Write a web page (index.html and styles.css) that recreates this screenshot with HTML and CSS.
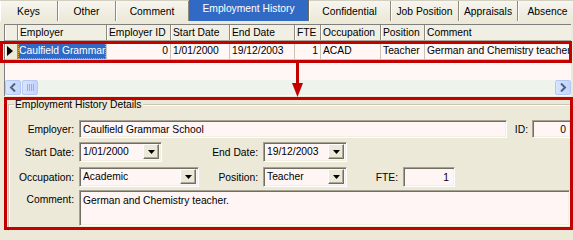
FILE: index.html
```html
<!DOCTYPE html>
<html>
<head>
<meta charset="utf-8">
<link rel="stylesheet" href="styles.css">
</head>
<body>
<div class="tabs">
  <div class="tab w-keys">Keys</div>
  <div class="tab w-other">Other</div>
  <div class="tab w-comment">Comment</div>
  <div class="tab tab-sel w-emp">Employment History</div>
  <div class="tab w-conf">Confidential</div>
  <div class="tab w-job">Job Position</div>
  <div class="tab w-appr">Appraisals</div>
  <div class="tab w-abs">Absence</div>
</div>

<div class="grid">
  <div class="grid-head">
    <div class="hc c-ind"></div>
    <div class="hc c-emp">Employer</div>
    <div class="hc c-eid">Employer ID</div>
    <div class="hc c-sd">Start Date</div>
    <div class="hc c-ed">End Date</div>
    <div class="hc c-fte">FTE</div>
    <div class="hc c-occ">Occupation</div>
    <div class="hc c-pos">Position</div>
    <div class="hc c-com">Comment</div>
  </div>
  <div class="grid-row">
    <div class="dc c-ind ind-cell"><svg class="ind-tri" width="6" height="10" viewBox="0 0 6 10"><path d="M0 0 L6 5 L0 10 Z" fill="#000"/></svg></div>
    <div class="dc c-emp sel-wrap"><span class="sel">Caulfield Grammar</span></div>
    <div class="dc c-eid num">0</div>
    <div class="dc c-sd">1/01/2000</div>
    <div class="dc c-ed">19/12/2003</div>
    <div class="dc c-fte num">1</div>
    <div class="dc c-occ">ACAD</div>
    <div class="dc c-pos">Teacher</div>
    <div class="dc c-com">German and Chemistry teacher</div>
  </div>
  <div class="grid-empty"></div>
  <div class="hscroll">
    <div class="sb-btn"><svg width="8" height="9" viewBox="0 0 8 9"><path d="M6 0.5 L2 4.5 L6 8.5" fill="none" stroke="#4D6185" stroke-width="2"/></svg></div>
    <div class="sb-thumb"><svg width="7" height="7" viewBox="0 0 7 7"><path d="M0.5 0 V7 M2.5 0 V7 M4.5 0 V7 M6.5 0 V7" stroke="#8CB0F8" stroke-width="1"/></svg></div>
    <div class="sb-track"></div>
    <div class="sb-btn"><svg width="8" height="9" viewBox="0 0 8 9"><path d="M2 0.5 L6 4.5 L2 8.5" fill="none" stroke="#4D6185" stroke-width="2"/></svg></div>
  </div>
</div>

<div class="details">
  <div class="group">
    <span class="legend">Employment History Details</span>
    <div class="frow r1">
      <span class="lbl l-main">Employer:</span>
      <div class="inp i-emp">Caulfield Grammar School</div>
      <span class="lbl l-id">ID:</span>
      <div class="inp i-id">0</div>
    </div>
    <div class="frow r2">
      <span class="lbl l-main">Start Date:</span>
      <div class="combo cb-date"><span class="cb-text">1/01/2000</span><span class="cb-btn"><svg width="7" height="4" viewBox="0 0 7 4"><path d="M0 0 H7 L3.5 4 Z" fill="#000"/></svg></span></div>
      <span class="lbl l-end">End Date:</span>
      <div class="combo cb-date2"><span class="cb-text">19/12/2003</span><span class="cb-btn"><svg width="7" height="4" viewBox="0 0 7 4"><path d="M0 0 H7 L3.5 4 Z" fill="#000"/></svg></span></div>
    </div>
    <div class="frow r3">
      <span class="lbl l-main">Occupation:</span>
      <div class="combo cb-occ"><span class="cb-text">Academic</span><span class="cb-btn"><svg width="7" height="4" viewBox="0 0 7 4"><path d="M0 0 H7 L3.5 4 Z" fill="#000"/></svg></span></div>
      <span class="lbl l-pos">Position:</span>
      <div class="combo cb-date2"><span class="cb-text">Teacher</span><span class="cb-btn"><svg width="7" height="4" viewBox="0 0 7 4"><path d="M0 0 H7 L3.5 4 Z" fill="#000"/></svg></span></div>
      <span class="lbl l-fte">FTE:</span>
      <div class="inp i-fte">1</div>
    </div>
    <div class="frow r4">
      <span class="lbl l-main l-top">Comment:</span>
      <div class="inp memo">German and Chemistry teacher.</div>
    </div>
  </div>
</div>

<div class="mark mark-row"></div>
<div class="mark mark-details"></div>
<svg class="arrow" width="16" height="36" viewBox="0 0 16 36">
  <rect x="6" y="0" width="3" height="23" fill="#C40000"/>
  <path d="M2 21 H13 L7.5 35 Z" fill="#C40000"/>
</svg>
</body>
</html>
```

FILE: styles.css
```css
html, body {
  margin: 0;
  padding: 0;
}
body {
  position: relative;
  width: 573px;
  height: 231px;
  overflow: hidden;
  background: #ECE9D8;
  font-family: "Liberation Sans", Arial, sans-serif;
  font-size: 10.3px;
  color: #000;
}

/* ---------- tabs ---------- */
.tabs {
  display: flex;
  height: 22px;
  border-top: 1px solid #D2CFC0;
  box-sizing: border-box;
  white-space: nowrap;
}
.tab {
  flex: none;
  box-sizing: border-box;
  height: 20px;
  line-height: 22px;
  text-align: center;
  background: linear-gradient(#F6F5EF, #ECE9D8);
  border-right: 1px solid #8E8B7C;
  box-shadow: inset 1px 0 #FFFFFF;
}
.tab-sel {
  margin-top: -1px;
  height: 21px;
  line-height: 18px;
  background: #316AC5;
  color: #fff;
  box-shadow: none;
  border-right: 1px solid #6E6B5E;
}
.w-keys { width: 58px; }
.w-other { width: 58px; }
.w-comment { width: 73px; }
.w-emp { width: 120px; }
.w-conf { width: 82px; }
.w-job { width: 68px; }
.w-appr { width: 59px; }
.w-abs { width: 60px; }

/* ---------- grid ---------- */
.grid {
  margin: 2px 0 0 4px;
  width: 567px;
  height: 72px;
  box-sizing: border-box;
  border-left: 1px solid #7F7F7F;
  border-top: 1px solid #7F7F7F;
  background: #FFF6F6;
  overflow: hidden;
}
.grid-head, .grid-row {
  display: flex;
  white-space: nowrap;
}
.grid-head {
  height: 16px;
  background: #F1EFE3;
  border-bottom: 1px solid #ACA899;
  box-sizing: border-box;
}
.hc {
  flex: none;
  box-sizing: border-box;
  height: 15px;
  line-height: 16px;
  padding-left: 2px;
  border-right: 1px solid #8E8B7C;
  box-shadow: inset 1px 0 #FFFFFF;
  overflow: hidden;
}
.grid-row {
  height: 19px;
  box-sizing: border-box;
  border-bottom: 1px solid #C8C4B8;
}
.dc {
  flex: none;
  box-sizing: border-box;
  height: 18px;
  line-height: 20px;
  padding-left: 2px;
  border-right: 1px solid #C8C4B8;
  overflow: hidden;
}
.dc.num {
  text-align: right;
  padding-left: 0;
  padding-right: 2px;
}
.c-ind { width: 13px; padding-left: 0; }
.c-emp { width: 89px; }
.c-eid { width: 64px; }
.c-sd { width: 59px; }
.c-ed { width: 65px; }
.c-fte { width: 26px; }
.c-occ { width: 60px; }
.c-pos { width: 44px; }
.c-com { flex: 1 1 auto; width: auto; border-right: none; }
.ind-cell {
  background: #ECE9D8;
  border-right: 1px solid #8E8B7C;
  box-shadow: inset 1px 0 #fff;
  display: flex;
  align-items: center;
  padding-left: 2px;
  padding-top: 2px;
}
.ind-tri { display: block; }
.sel-wrap {
  padding-left: 0;
  padding-top: 1px;
}
.sel {
  display: block;
  box-sizing: border-box;
  height: 17px;
  line-height: 17px;
  margin-right: 0;
  padding-left: 1px;
  background: #316AC5;
  color: #fff;
  outline: 1px dotted #D9A94A;
  outline-offset: -1px;
  white-space: nowrap;
  overflow: hidden;
}
.grid-empty {
  height: 20px;
}
.hscroll {
  display: flex;
  height: 15px;
  background: #EEF3EC;
}
.sb-btn, .sb-thumb {
  flex: none;
  width: 16px;
  height: 15px;
  box-sizing: border-box;
  border: 1px solid #B4C8F6;
  border-radius: 2px;
  background: linear-gradient(90deg, #D9E4FD, #C3D3FC);
  display: flex;
  align-items: center;
  justify-content: center;
}
.sb-thumb { margin-left: 1px; }
.sb-track { flex: 1 1 auto; }

/* ---------- details ---------- */
.details {
  margin: 1px 0 0 4px;
  width: 569px;
  height: 134px;
  overflow: hidden;
}
.group {
  margin: 7px 0 0 4px;
  width: 565px;
  height: 130px;
  box-sizing: border-box;
  border-top: 1px solid #C9C6B5;
  border-left: 1px solid #C9C6B5;
  box-shadow: inset 1px 1px #FFFFFF;
}
.legend {
  display: block;
  width: max-content;
  margin: -7px 0 0 5px;
  padding: 0 2px 0 1px;
  height: 12px;
  line-height: 13px;
  background: #ECE9D8;
}
.frow {
  display: flex;
  align-items: center;
  white-space: nowrap;
}
.r1 { margin-top: 10px; height: 18px; }
.r2 { margin-top: 4px; height: 20px; }
.r3 { margin-top: 5px; height: 20px; }
.r4 { margin-top: 3px; height: 36px; align-items: flex-start; }
.lbl {
  flex: none;
  text-align: right;
  box-sizing: border-box;
}
.l-main { width: 65px; margin-right: 5px; }
.l-id { width: 21px; margin-right: 4px; }
.l-end { width: 96px; margin-right: 5px; }
.l-pos { width: 59px; margin-right: 5px; }
.l-fte { width: 51px; margin-right: 5px; }
.l-top { padding-top: 4px; }

.inp, .combo {
  flex: none;
  box-sizing: border-box;
  background: #FFF5F5;
  border: 1px solid;
  border-color: #A5A293 #FFFFFF #FFFFFF #A5A293;
  box-shadow: inset 1px 1px #716F64, inset -1px -1px #F1EFE2;
  padding-left: 3px;
  overflow: hidden;
}
.inp {
  height: 18px;
  line-height: 17px;
}
.i-emp { width: 428px; }
.i-id { width: 39px; text-align: right; padding-right: 4px; padding-left: 0; }
.i-fte { width: 52px; height: 20px; line-height: 19px; text-align: right; padding-right: 5px; padding-left: 0; }
.memo {
  width: 491px;
  height: 36px;
  line-height: 16px;
  padding-top: 2px;
}
.combo {
  display: flex;
  align-items: center;
  height: 20px;
  padding-right: 2px;
}
.cb-text { flex: 1 1 auto; line-height: 16px; }
.cb-btn {
  flex: none;
  width: 16px;
  height: 15px;
  box-sizing: border-box;
  background: #ECE9D8;
  border: 1px solid;
  border-color: #FFFFFF #716F64 #716F64 #FFFFFF;
  box-shadow: inset -1px -1px #ACA899;
  display: flex;
  align-items: center;
  justify-content: center;
  margin-top: -1px;
}
.cb-date { width: 83px; }
.cb-date2 { width: 84px; }
.cb-occ { width: 120px; }

/* ---------- annotation overlays ---------- */
.mark {
  position: absolute;
  box-sizing: border-box;
  border: 3px solid #C40000;
}
.mark-row {
  left: 0;
  top: 41px;
  width: 572px;
  height: 22px;
}
.mark-details {
  left: 4px;
  top: 97px;
  width: 569px;
  height: 133px;
}
.arrow {
  position: absolute;
  left: 290px;
  top: 62px;
}
```
